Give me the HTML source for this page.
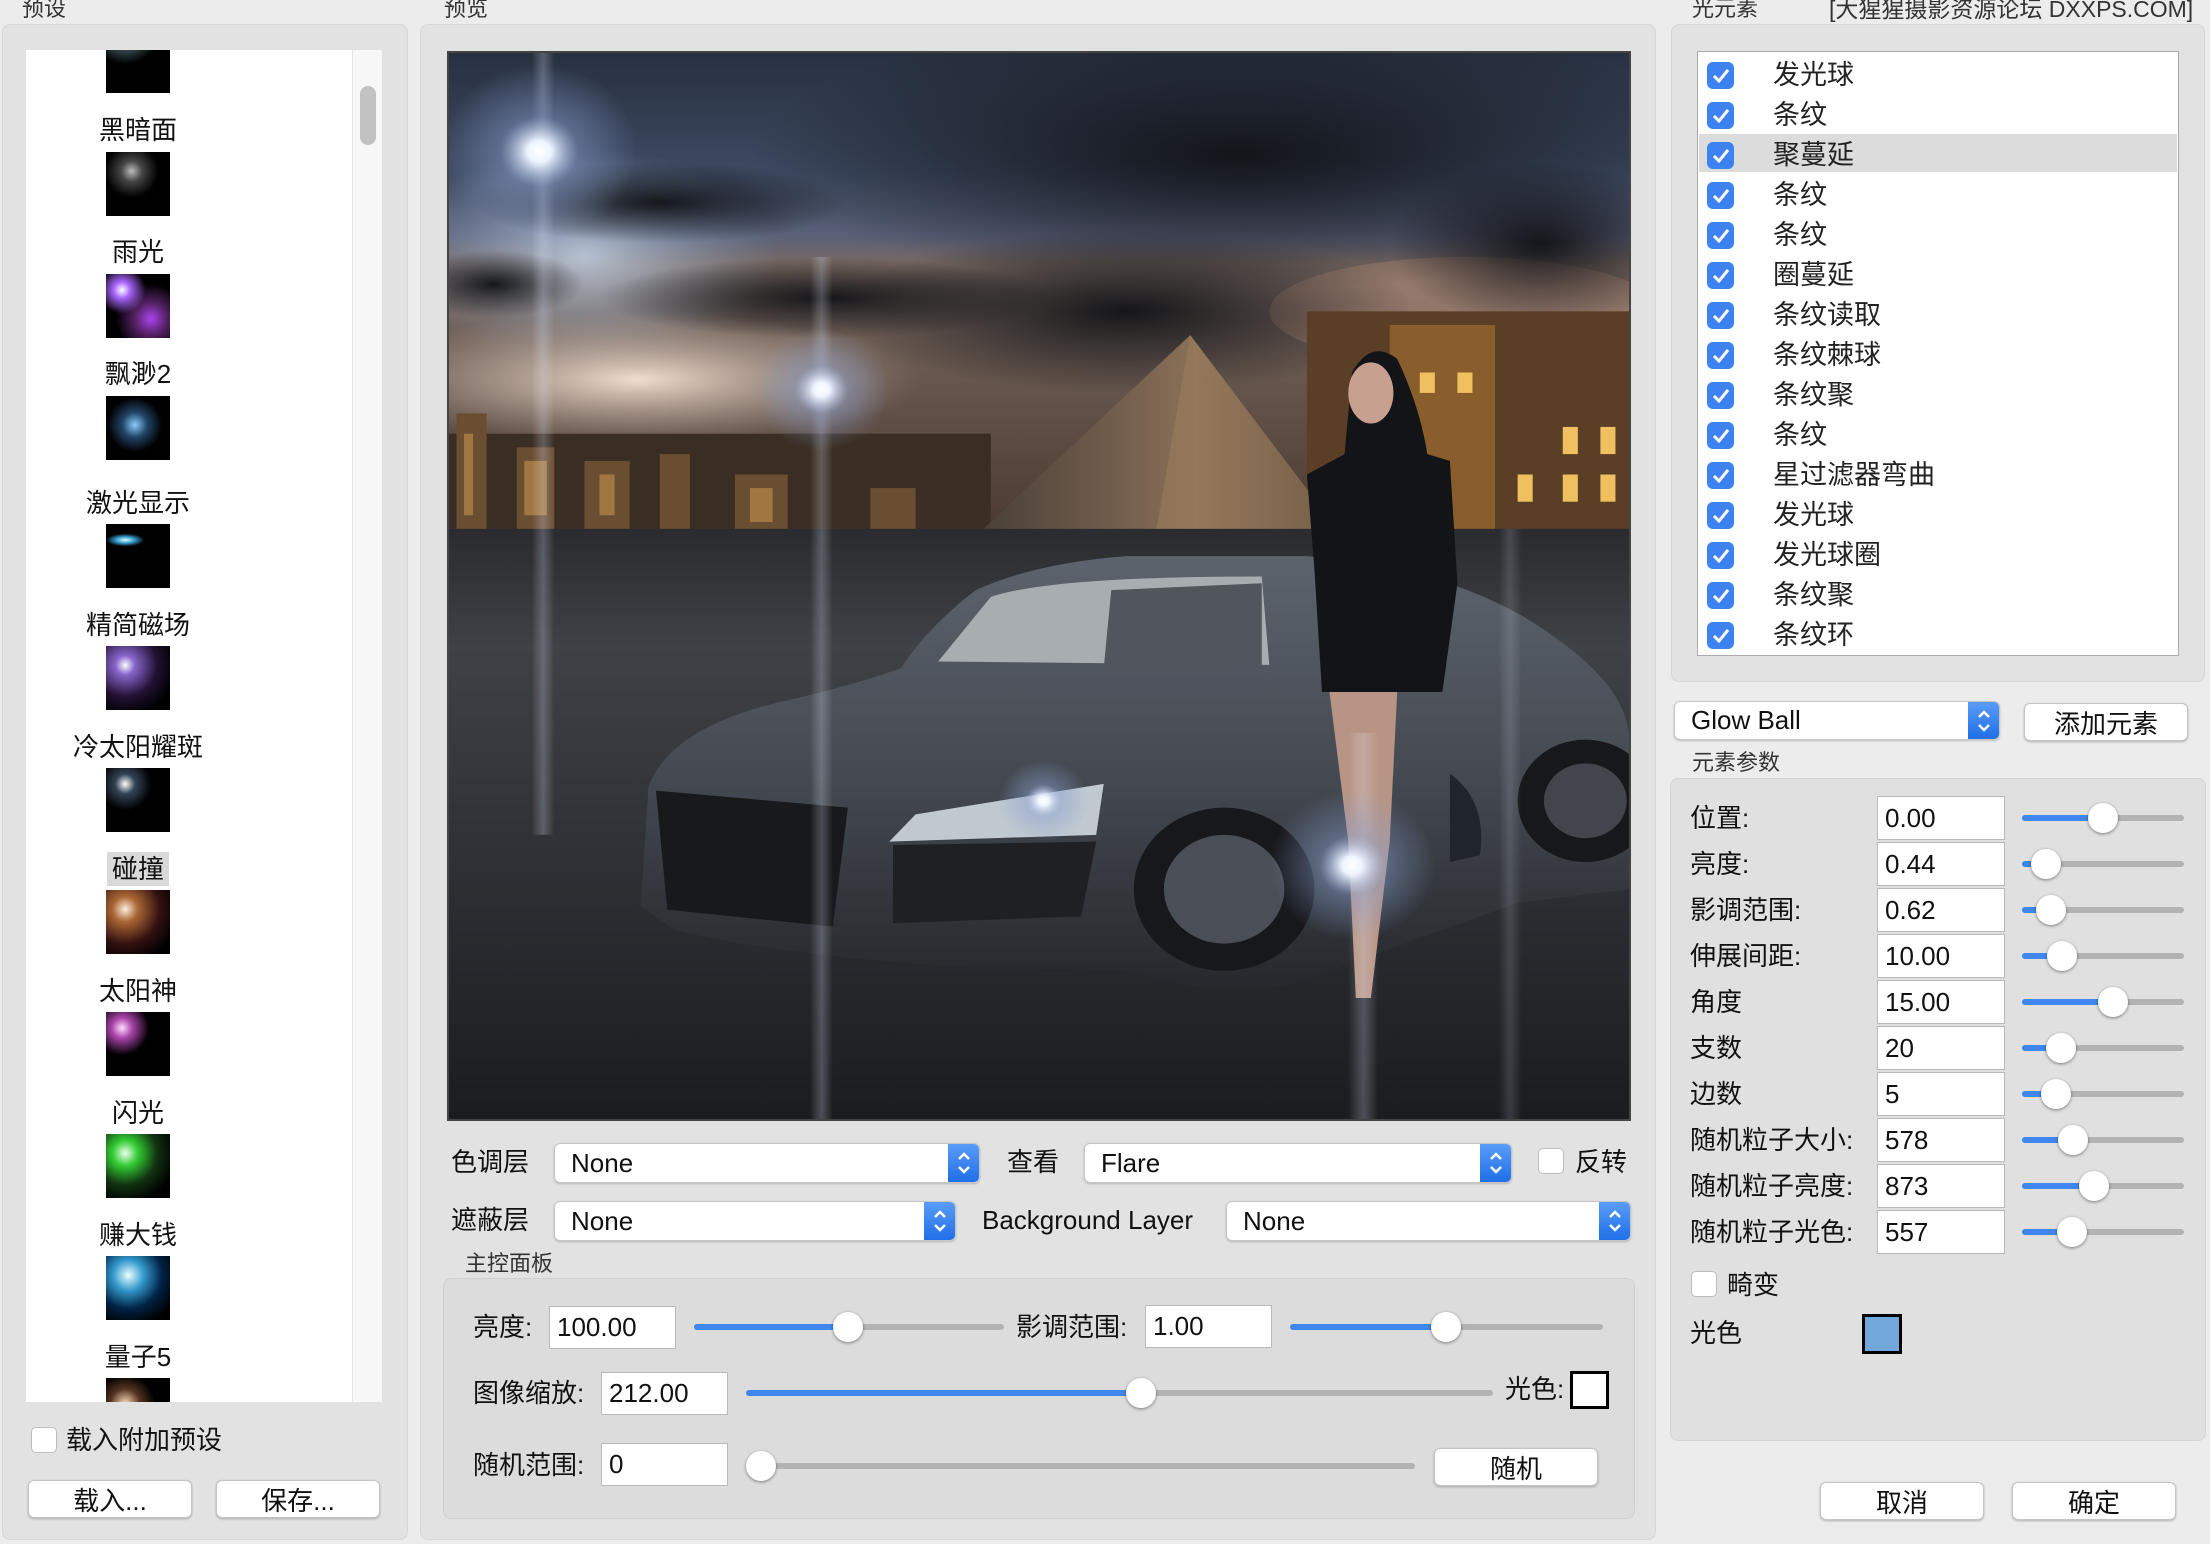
<!DOCTYPE html>
<html><head><meta charset="utf-8"><style>
*{box-sizing:border-box;margin:0;padding:0}
body{width:2210px;height:1544px;background:#ececec;position:relative;overflow:hidden;font-family:"Liberation Sans","Noto Sans CJK SC",sans-serif;color:#111}
.a{position:absolute}
.panel{position:absolute;background:#e2e2e2;border:1px solid #d6d6d6;border-radius:8px}
.lbl{position:absolute;font-size:22px;color:#333;line-height:1}
.t{position:absolute;font-size:26px;line-height:1;white-space:nowrap}
.thumb{position:absolute;left:106px;width:64px;height:64px;background:#000;overflow:hidden}
.pl{position:absolute;width:224px;left:0;text-align:center;font-size:26px;line-height:30px}
.inp{position:absolute;background:#fff;border:1px solid #b9b9b9;font-size:26px;padding-left:7px;display:flex;align-items:center}
.btn{position:absolute;background:#fff;border:1px solid #c4c4c4;border-radius:6px;box-shadow:0 1px 2px rgba(0,0,0,.25);font-size:26px;display:flex;align-items:center;justify-content:center}
.sel{position:absolute;background:#fff;border:1px solid #c6c6c6;border-radius:6px;box-shadow:0 1px 2px rgba(0,0,0,.2);font-size:26px;padding-left:16px;display:flex;align-items:center;overflow:hidden}
.sel .ar{position:absolute;right:0;top:0;bottom:0;width:31px;background:linear-gradient(#5a9cf8,#1f6fe8);display:flex;align-items:center;justify-content:center}
.track{position:absolute;height:6px;border-radius:3px;background:#b3b3b3}
.fill{position:absolute;left:0;top:0;height:6px;border-radius:3px;background:#3f87ee}
.knob{position:absolute;width:30px;height:30px;border-radius:50%;background:#fff;box-shadow:0 1px 3px rgba(0,0,0,.45);top:-12px}
.cb{position:absolute;width:27px;height:27px;border-radius:6px;background:#3d82f0;display:flex;align-items:center;justify-content:center}
.cbe{position:absolute;width:26px;height:26px;border-radius:5px;background:#fff;border:1px solid #bdbdbd}
</style></head><body>

<!-- LEFT -->
<div class="lbl" style="left:22px;top:-2px">预设</div>
<div class="panel" style="left:2px;top:24px;width:406px;height:1516px"></div>
<div class="a" style="left:26px;top:50px;width:326px;height:1352px;background:#fff;overflow:hidden">
 <div class="thumb" style="top:-21px;left:80px;background:radial-gradient(circle at 30% 0%,#cfe 0,#577 15%,#000 45%)"></div>
 <div class="pl" style="top:65px">黑暗面</div>
 <div class="thumb" style="top:102px;left:80px;background:radial-gradient(circle at 40% 30%,#bbb 0,#444 18%,#000 45%)"></div>
 <div class="pl" style="top:187px">雨光</div>
 <div class="thumb" style="top:224px;left:80px;background:radial-gradient(circle at 25% 25%,#fff 0,#a6f 12%,transparent 35%),radial-gradient(ellipse at 70% 70%,#a4e 0,#526 25%,#000 55%)"></div>
 <div class="pl" style="top:309px">飘渺2</div>
 <div class="thumb" style="top:346px;left:80px;background:radial-gradient(circle at 45% 45%,#8cf 0,#246 25%,#000 55%)"></div>
 <div class="pl" style="top:438px">激光显示</div>
 <div class="thumb" style="top:474px;left:80px;background:radial-gradient(ellipse 30% 10% at 30% 25%,#dff 0,#39c 50%,transparent 100%),#000"></div>
 <div class="pl" style="top:560px">精简磁场</div>
 <div class="thumb" style="top:596px;left:80px;background:radial-gradient(circle at 30% 30%,#fff 0,#86c 15%,#213 50%,#000 80%)"></div>
 <div class="pl" style="top:682px">冷太阳耀斑</div>
 <div class="thumb" style="top:718px;left:80px;background:radial-gradient(circle at 30% 25%,#fff 0,#345 15%,#000 40%)"></div>
 <div class="a" style="left:81px;top:802px;width:62px;height:34px;background:#d9d9d9"></div>
 <div class="pl" style="top:804px">碰撞</div>
 <div class="thumb" style="top:840px;left:80px;background:radial-gradient(circle at 30% 30%,#fed 0,#a63 20%,#311 55%,#000 85%)"></div>
 <div class="pl" style="top:926px">太阳神</div>
 <div class="thumb" style="top:962px;left:80px;background:radial-gradient(circle at 25% 25%,#fdf 0,#a4a 15%,#000 40%)"></div>
 <div class="pl" style="top:1048px">闪光</div>
 <div class="thumb" style="top:1084px;left:80px;background:radial-gradient(circle at 30% 30%,#efe 0,#3c3 20%,#131 50%,#000 80%)"></div>
 <div class="pl" style="top:1170px">赚大钱</div>
 <div class="thumb" style="top:1206px;left:80px;background:radial-gradient(circle at 35% 30%,#eff 0,#39c 25%,#024 55%,#000 85%)"></div>
 <div class="pl" style="top:1292px">量子5</div>
 <div class="thumb" style="top:1328px;left:80px;background:radial-gradient(circle at 30% 40%,#fdb 0,#532 25%,#000 50%)"></div>
</div>
<div class="a" style="left:352px;top:50px;width:30px;height:1352px;background:#f7f7f7;border-left:1px solid #e4e4e4"></div>
<div class="a" style="left:360px;top:86px;width:16px;height:59px;border-radius:8px;background:#c2c2c2"></div>
<div class="cbe" style="left:31px;top:1427px"></div>
<div class="t" style="left:66px;top:1427px">载入附加预设</div>
<div class="btn" style="left:28px;top:1480px;width:164px;height:38px">载入...</div>
<div class="btn" style="left:216px;top:1480px;width:164px;height:38px">保存...</div>

<!-- MIDDLE -->
<div class="lbl" style="left:444px;top:-2px">预览</div>
<div class="panel" style="left:420px;top:24px;width:1236px;height:1516px"></div>
<div class="a" style="left:447px;top:51px;width:1184px;height:1070px;border:2px solid #444;overflow:hidden;background:#333">
<svg width="1180" height="1066" viewBox="0 0 1568 1568" preserveAspectRatio="none">
<defs>
<linearGradient id="sky" x1="0" y1="0" x2="0" y2="1"><stop offset="0" stop-color="#283040"/><stop offset=".25" stop-color="#3e4a62"/><stop offset=".38" stop-color="#5a6078"/><stop offset=".44" stop-color="#7a6a62"/><stop offset="1" stop-color="#4a3a30"/></linearGradient>
<linearGradient id="gnd" x1="0" y1="0" x2="0" y2="1"><stop offset="0" stop-color="#2a2b2f"/><stop offset=".2" stop-color="#3e4146"/><stop offset="1" stop-color="#1a1c20"/></linearGradient>
<radialGradient id="gl"><stop offset="0" stop-color="#fff"/><stop offset=".12" stop-color="#eef4ff"/><stop offset=".4" stop-color="#8aa0d0" stop-opacity=".45"/><stop offset="1" stop-color="#8aa0d0" stop-opacity="0"/></radialGradient>
<radialGradient id="cl"><stop offset="0" stop-color="#101216" stop-opacity=".95"/><stop offset="1" stop-color="#101216" stop-opacity="0"/></radialGradient>
<radialGradient id="lt"><stop offset="0" stop-color="#f6e4d4" stop-opacity=".95"/><stop offset="1" stop-color="#c8b4a8" stop-opacity="0"/></radialGradient>
<radialGradient id="bl"><stop offset="0" stop-color="#c8d8ea" stop-opacity=".8"/><stop offset="1" stop-color="#8aa0c0" stop-opacity="0"/></radialGradient>
<linearGradient id="car" x1="0" y1="0" x2="0" y2="1"><stop offset="0" stop-color="#5c636c"/><stop offset=".5" stop-color="#454a52"/><stop offset="1" stop-color="#25282c"/></linearGradient>
<linearGradient id="pyr" x1="0" y1="0" x2="1" y2="0"><stop offset="0" stop-color="#4a4038"/><stop offset=".6" stop-color="#8a7058"/><stop offset="1" stop-color="#4a4038"/></linearGradient>
<linearGradient id="beam" x1="0" y1="0" x2="1" y2="0"><stop offset="0" stop-color="#fff" stop-opacity="0"/><stop offset=".5" stop-color="#dde6ff" stop-opacity=".25"/><stop offset="1" stop-color="#fff" stop-opacity="0"/></linearGradient>
</defs>
<rect width="1568" height="710" fill="url(#sky)"/>
<ellipse cx="180" cy="300" rx="260" ry="160" fill="url(#bl)"/>
<ellipse cx="250" cy="480" rx="380" ry="100" fill="url(#lt)"/>
<ellipse cx="1350" cy="380" rx="260" ry="80" fill="#b08a78" opacity=".5"/>
<ellipse cx="1050" cy="150" rx="650" ry="200" fill="url(#cl)"/>
<ellipse cx="900" cy="380" rx="380" ry="120" fill="url(#cl)"/>
<ellipse cx="280" cy="220" rx="250" ry="60" fill="url(#cl)"/>
<ellipse cx="500" cy="360" rx="300" ry="60" fill="url(#cl)"/>
<ellipse cx="1450" cy="280" rx="200" ry="120" fill="url(#cl)"/>
<ellipse cx="60" cy="340" rx="120" ry="50" fill="url(#cl)"/>
<rect x="0" y="560" width="720" height="140" fill="#3a2e24"/>
<g fill="#6a4e32"><rect x="10" y="530" width="40" height="170"/><rect x="90" y="580" width="50" height="120"/><rect x="180" y="600" width="60" height="100"/><rect x="280" y="590" width="40" height="110"/><rect x="380" y="620" width="70" height="80"/><rect x="560" y="640" width="60" height="60"/></g>
<g fill="#d8a050" opacity=".5"><rect x="20" y="560" width="12" height="120"/><rect x="100" y="600" width="30" height="80"/><rect x="200" y="620" width="20" height="60"/><rect x="400" y="640" width="30" height="50"/></g>
<rect x="1140" y="380" width="428" height="320" fill="#5a3e26"/>
<rect x="1250" y="400" width="140" height="300" fill="#8a5e2c"/>
<g fill="#f0c060"><rect x="1290" y="470" width="20" height="30"/><rect x="1340" y="470" width="20" height="30"/><rect x="1480" y="550" width="20" height="40"/><rect x="1530" y="550" width="20" height="40"/><rect x="1480" y="620" width="20" height="40"/><rect x="1530" y="620" width="20" height="40"/><rect x="1420" y="620" width="20" height="40"/></g>
<polygon points="985,415 710,700 1180,700" fill="url(#pyr)"/>
<polygon points="985,415 940,700 1180,700" fill="#a0805c" opacity=".5"/>
<rect x="0" y="700" width="1568" height="868" fill="url(#gnd)"/>
<path d="M255,1255 L265,1080 Q290,1000 420,960 Q540,930 600,905 Q640,840 700,790 Q780,750 900,740 L1140,740 Q1350,760 1470,860 Q1560,930 1568,1000 L1568,1230 L1420,1250 L1120,1370 Q1000,1390 920,1350 L700,1345 Q450,1330 300,1290 Z" fill="url(#car)"/>
<path d="M650,895 L720,800 Q800,770 1080,770 L1090,900 Z" fill="#a8adb2"/>
<path d="M880,790 L1080,780 L1080,900 L870,905 Z" fill="#50565c"/>
<path d="M275,1085 L530,1110 L510,1285 L290,1260 Z" fill="#17191c"/>
<path d="M585,1160 L620,1120 L870,1075 L860,1150 Z" fill="#c0c8d0"/>
<path d="M590,1165 L860,1160 L840,1270 L590,1280 Z" fill="#1e2024"/>
<circle cx="1030" cy="1230" r="120" fill="#17181b"/>
<circle cx="1030" cy="1230" r="80" fill="#4a4e56"/>
<circle cx="1510" cy="1100" r="90" fill="#17181b"/>
<circle cx="1510" cy="1100" r="55" fill="#42464c"/>
<path d="M1200,470 Q1225,420 1260,450 Q1290,520 1300,590 L1330,600 L1340,780 L1320,940 L1160,940 L1150,760 L1140,620 L1190,590 Z" fill="#121418"/>
<ellipse cx="1225" cy="500" rx="30" ry="45" fill="#c8a090"/>
<path d="M1170,940 L1260,940 L1250,1160 L1225,1390 L1205,1390 L1195,1160 Z" fill="#b89484"/>
<path d="M1330,1060 Q1380,1100 1370,1180 L1330,1190 Z" fill="#20242c"/>
<rect x="110" y="0" width="30" height="1150" fill="url(#beam)"/>
<rect x="480" y="300" width="30" height="1268" fill="url(#beam)"/>
<rect x="1195" y="1000" width="40" height="568" fill="url(#beam)"/>
<rect x="1395" y="700" width="30" height="868" fill="url(#beam)" opacity=".6"/>
<circle cx="120" cy="145" r="130" fill="url(#gl)"/>
<circle cx="495" cy="495" r="90" fill="url(#gl)"/>
<circle cx="1200" cy="1195" r="110" fill="url(#gl)"/>
<circle cx="790" cy="1100" r="60" fill="url(#gl)"/>
</svg>
</div>

<div class="t" style="left:451px;top:1149px">色调层</div>
<div class="sel" style="left:554px;top:1143px;width:426px;height:40px">None<div class="ar"><svg width="14" height="26" viewBox="0 0 14 26"><path d="M2 9 L7 4 L12 9 M2 17 L7 22 L12 17" stroke="#fff" stroke-width="2.5" fill="none"/></svg></div></div>
<div class="t" style="left:1007px;top:1149px">查看</div>
<div class="sel" style="left:1084px;top:1143px;width:428px;height:40px">Flare<div class="ar"><svg width="14" height="26" viewBox="0 0 14 26"><path d="M2 9 L7 4 L12 9 M2 17 L7 22 L12 17" stroke="#fff" stroke-width="2.5" fill="none"/></svg></div></div>
<div class="cbe" style="left:1538px;top:1148px"></div>
<div class="t" style="left:1575px;top:1149px">反转</div>
<div class="t" style="left:451px;top:1207px">遮蔽层</div>
<div class="sel" style="left:554px;top:1201px;width:402px;height:40px">None<div class="ar"><svg width="14" height="26" viewBox="0 0 14 26"><path d="M2 9 L7 4 L12 9 M2 17 L7 22 L12 17" stroke="#fff" stroke-width="2.5" fill="none"/></svg></div></div>
<div class="t" style="left:982px;top:1207px">Background Layer</div>
<div class="sel" style="left:1226px;top:1201px;width:405px;height:40px">None<div class="ar"><svg width="14" height="26" viewBox="0 0 14 26"><path d="M2 9 L7 4 L12 9 M2 17 L7 22 L12 17" stroke="#fff" stroke-width="2.5" fill="none"/></svg></div></div>

<div class="lbl" style="left:465px;top:1253px">主控面板</div>
<div class="a" style="left:443px;top:1278px;width:1192px;height:241px;background:#dcdcdc;border:1px solid #d0d0d0;border-radius:8px"></div>
<div class="t" style="left:473px;top:1314px">亮度:</div>
<div class="inp" style="left:549px;top:1306px;width:127px;height:43px">100.00</div>
<div class="track" style="left:694px;top:1324px;width:310px"><div class="fill" style="width:154px"></div><div class="knob" style="left:139px"></div></div>
<div class="t" style="left:1016px;top:1314px">影调范围:</div>
<div class="inp" style="left:1145px;top:1305px;width:127px;height:43px">1.00</div>
<div class="track" style="left:1290px;top:1324px;width:313px"><div class="fill" style="width:156px"></div><div class="knob" style="left:141px"></div></div>
<div class="t" style="left:473px;top:1380px">图像缩放:</div>
<div class="inp" style="left:601px;top:1372px;width:127px;height:43px">212.00</div>
<div class="track" style="left:746px;top:1390px;width:747px"><div class="fill" style="width:395px"></div><div class="knob" style="left:380px"></div></div>
<div class="t" style="left:1505px;top:1376px">光色:</div>
<div class="a" style="left:1570px;top:1371px;width:39px;height:38px;background:#fff;border:3px solid #000"></div>
<div class="t" style="left:473px;top:1452px">随机范围:</div>
<div class="inp" style="left:601px;top:1443px;width:127px;height:43px">0</div>
<div class="track" style="left:746px;top:1463px;width:669px"><div class="knob" style="left:0px"></div></div>
<div class="btn" style="left:1434px;top:1448px;width:164px;height:38px">随机</div>

<!-- RIGHT -->
<div class="lbl" style="left:1692px;top:-2px">光元素</div>
<div class="lbl" style="left:1829px;top:-2px;font-size:23px">[大猩猩摄影资源论坛 DXXPS.COM]</div>
<div class="panel" style="left:1671px;top:24px;width:534px;height:658px"></div>
<div class="a" style="left:1697px;top:51px;width:482px;height:605px;background:#fff;border:1px solid #aaa"></div>
<div class="a" style="left:1699px;top:134px;width:478px;height:38px;background:#dcdcdc"></div>
<div id="rows"></div>
<script>
var n=["发光球","条纹","聚蔓延","条纹","条纹","圈蔓延","条纹读取","条纹棘球","条纹聚","条纹","星过滤器弯曲","发光球","发光球圈","条纹聚","条纹环"],h="";
for(var i=0;i<n.length;i++){var y=74+i*40;h+='<div class="cb" style="left:1707px;top:'+(y-12)+'px"><svg width="18" height="16" viewBox="0 0 18 16"><path d="M2 8 L7 13 L16 2" stroke="#fff" stroke-width="3" fill="none"/></svg></div><div class="t" style="left:1773px;top:'+(y-12)+'px;font-size:27px;color:#222">'+n[i]+'</div>';}
document.getElementById("rows").outerHTML=h;
</script>

<div class="sel" style="left:1674px;top:701px;width:326px;height:39px">Glow Ball<div class="ar"><svg width="14" height="26" viewBox="0 0 14 26"><path d="M2 9 L7 4 L12 9 M2 17 L7 22 L12 17" stroke="#fff" stroke-width="2.5" fill="none"/></svg></div></div>
<div class="btn" style="left:2024px;top:703px;width:164px;height:38px">添加元素</div>
<div class="lbl" style="left:1692px;top:752px">元素参数</div>
<div class="a" style="left:1670px;top:778px;width:536px;height:663px;background:#e0e0e0;border:1px solid #d4d4d4;border-radius:8px"></div>
<div id="prm"></div>
<script>
var p=[["位置:","0.00",2103],["亮度:","0.44",2046],["影调范围:","0.62",2051],["伸展间距:","10.00",2062],["角度","15.00",2113],["支数","20",2061],["边数","5",2056],["随机粒子大小:","578",2073],["随机粒子亮度:","873",2094],["随机粒子光色:","557",2072]],s="";
for(var i=0;i<p.length;i++){var y=818+i*46;s+='<div class="t" style="left:1690px;top:'+(y-13)+'px">'+p[i][0]+'</div><div class="inp" style="left:1877px;top:'+(y-22)+'px;width:128px;height:44px">'+p[i][1]+'</div><div class="track" style="left:2022px;top:'+(y-3)+'px;width:162px"><div class="fill" style="width:'+(p[i][2]-2022)+'px"></div><div class="knob" style="left:'+(p[i][2]-2022-15)+'px"></div></div>';}
document.getElementById("prm").outerHTML=s;
</script>
<div class="cbe" style="left:1691px;top:1271px"></div>
<div class="t" style="left:1727px;top:1272px">畸变</div>
<div class="t" style="left:1690px;top:1320px">光色</div>
<div class="a" style="left:1862px;top:1314px;width:40px;height:40px;background:#72a8dc;border:3px solid #000"></div>
<div class="btn" style="left:1820px;top:1482px;width:164px;height:38px">取消</div>
<div class="btn" style="left:2012px;top:1482px;width:164px;height:38px">确定</div>
</body></html>
